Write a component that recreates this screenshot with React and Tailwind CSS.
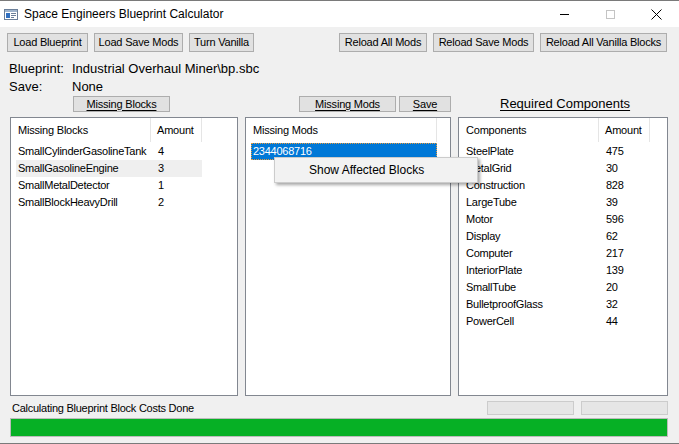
const WinButton = ({ w, h = "h-[19px]", underline, children, className = "" }) => (
  <div
    className={`${w} ${h} ${className} flex items-center justify-center bg-[#e1e1e1] border border-[#adadad] text-[11px] tracking-[-0.2px] text-black leading-none whitespace-nowrap`}
  >
    <span className={underline ? "underline underline-offset-2" : ""}>{children}</span>
  </div>
);

const ListView = ({ w, columns, rows, hoverRow, selectedRow }) => (
  <div className={`${w} h-[279px] border border-[#828790] bg-white`}>
    <div className="flex h-[24px] pl-[5px]">
      {columns.map((c, i) => (
        <div
          key={c.label}
          className={`${c.w} flex items-center border-r border-[#e5e5e5] ${i === 0 ? "pl-[2px]" : "pl-[6px]"} text-[11px] tracking-[-0.2px]`}
        >
          {c.label}
        </div>
      ))}
    </div>
    <div className="pl-[5px] pt-px">
      {rows.map((r, idx) => (
        <div
          key={idx}
          className={`flex h-[17px] items-center text-[11px] tracking-[-0.25px] w-fit ${
            idx === hoverRow ? "bg-[#efefef]" : ""
          } ${idx === selectedRow ? "bg-[#0078d7] text-white outline-1 outline-dotted outline-[#e89a3c] -outline-offset-1" : ""}`}
        >
          {r.map((cell, j) => (
            <div key={j} className={`${columns[j].w} ${j === 0 ? "pl-[2px]" : "pl-[7px]"} whitespace-nowrap`}>
              {cell}
            </div>
          ))}
        </div>
      ))}
    </div>
  </div>
);

const blocks = [
  ["SmallCylinderGasolineTank", "4"],
  ["SmallGasolineEngine", "3"],
  ["SmallMetalDetector", "1"],
  ["SmallBlockHeavyDrill", "2"],
];

const components = [
  ["SteelPlate", "475"],
  ["MetalGrid", "30"],
  ["Construction", "828"],
  ["LargeTube", "39"],
  ["Motor", "596"],
  ["Display", "62"],
  ["Computer", "217"],
  ["InteriorPlate", "139"],
  ["SmallTube", "20"],
  ["BulletproofGlass", "32"],
  ["PowerCell", "44"],
];

export default function App() {
  return (
    <div className="relative w-[679px] h-[444px] overflow-hidden bg-[#f0f0f0] border-t border-b border-[#7a7a7a] flex flex-col font-['Liberation_Sans',Arial,sans-serif] text-black">
      {/* title bar */}
      <div className="h-[26px] bg-white flex items-center shrink-0">
        <svg width="14" height="11" viewBox="0 0 14 11" className="ml-[4px]">
          <rect x="0.5" y="0.5" width="13" height="10" fill="#ffffff" stroke="#6b7f99" />
          <rect x="1" y="1" width="12" height="2" fill="#9fb4cc" />
          <rect x="2" y="4" width="4" height="5" fill="#2f6fc0" />
          <rect x="7" y="4" width="5" height="1" fill="#6b7f99" />
          <rect x="7" y="6" width="5" height="1" fill="#6b7f99" />
          <rect x="7" y="8" width="3" height="1" fill="#6b7f99" />
        </svg>
        <span className="ml-[6px] text-[12px]">Space Engineers Blueprint Calculator</span>
        <div className="ml-auto flex items-center h-full">
          <div className="w-[46px] flex justify-center">
            <div className="w-[9px] h-px bg-black" />
          </div>
          <div className="w-[46px] flex justify-center">
            <div className="w-[9px] h-[9px] border border-[#c4c4c4]" />
          </div>
          <div className="w-[46px] flex justify-center">
            <svg width="11" height="11" viewBox="0 0 11 11">
              <path d="M0.5 0.5 L10.5 10.5 M10.5 0.5 L0.5 10.5" stroke="#000" strokeWidth="1" />
            </svg>
          </div>
        </div>
      </div>

      {/* top buttons */}
      <div className="flex mt-[6px] pl-[7px]">
        <WinButton w="w-[81px]">Load Blueprint</WinButton>
        <WinButton w="w-[89px]" className="ml-[6px]">Load Save Mods</WinButton>
        <WinButton w="w-[65px]" className="ml-[6px]">Turn Vanilla</WinButton>
        <WinButton w="w-[88px]" className="ml-[85px]">Reload All Mods</WinButton>
        <WinButton w="w-[101px]" className="ml-[6px]">Reload Save Mods</WinButton>
        <WinButton w="w-[127px]" className="ml-[6px]">Reload All Vanilla Blocks</WinButton>
      </div>

      {/* labels */}
      <div className="mt-[8px] pl-[9px] text-[13px]">
        <div className="flex h-[18px] items-center">
          <span className="w-[63px]">Blueprint:</span>
          <span>Industrial Overhaul Miner\bp.sbc</span>
        </div>
        <div className="flex h-[18px] items-center">
          <span className="w-[63px]">Save:</span>
          <span>None</span>
        </div>
      </div>

      {/* second buttons row */}
      <div className="flex items-center h-[16px]">
        <WinButton w="w-[97px]" h="h-[16px]" underline className="ml-[73px]">Missing Blocks</WinButton>
        <WinButton w="w-[97px]" h="h-[16px]" underline className="ml-[129px]">Missing Mods</WinButton>
        <WinButton w="w-[52px]" h="h-[16px]" underline className="ml-[3px]">Save</WinButton>
        <span className="ml-[49px] text-[13px] underline underline-offset-2">Required Components</span>
      </div>

      {/* lists */}
      <div className="flex mt-[5px] pl-[10px]">
        <ListView
          w="w-[228px]"
          columns={[{ label: "Missing Blocks", w: "w-[135px]" }, { label: "Amount", w: "w-[51px]" }]}
          rows={blocks}
          hoverRow={1}
        />
        <div className="ml-[7px]">
          <ListView
            w="w-[206px]"
            columns={[{ label: "Missing Mods", w: "w-[186px]" }]}
            rows={[["2344068716"]]}
            selectedRow={0}
          />
        </div>
        <div className="ml-[7px]">
          <ListView
            w="w-[210px]"
            columns={[{ label: "Components", w: "w-[135px]" }, { label: "Amount", w: "w-[51px]" }]}
            rows={components}
          />
        </div>
      </div>

      {/* status row */}
      <div className="flex items-center mt-[5px] h-[14px] pl-[12px]">
        <span className="text-[11px] tracking-[-0.25px]">Calculating Blueprint Block Costs Done</span>
        <div className="ml-auto flex mr-[11px]">
          <div className="w-[87px] h-[14px] bg-[#e6e6e6] border border-[#cccccc]" />
          <div className="w-[87px] h-[14px] ml-[7px] bg-[#e6e6e6] border border-[#cccccc]" />
        </div>
      </div>

      {/* progress */}
      <div className="mt-[3px] ml-[10px] w-[658px] h-[19px] border border-[#bcbcbc] bg-[#06b025]" />

      {/* context menu */}
      <div className="absolute left-[274px] top-[156px] w-[204px] h-[26px] bg-[#f2f2f2] border border-[#cccccc] shadow-[2px_2px_3px_rgba(0,0,0,0.35)] flex items-center">
        <span className="ml-[34px] text-[12px]">Show Affected Blocks</span>
      </div>
    </div>
  );
}
